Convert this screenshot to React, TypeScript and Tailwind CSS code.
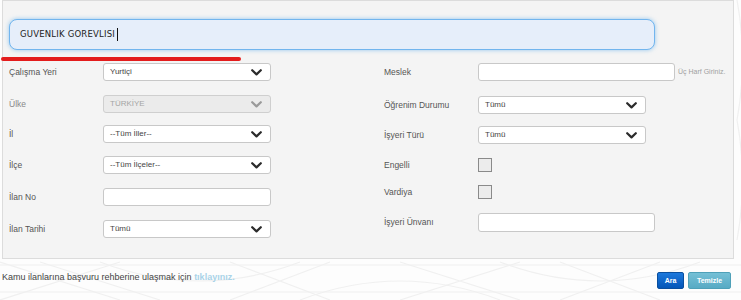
import React from 'react';

const Chevron: React.FC<{ muted?: boolean }> = ({ muted }) => (
  <svg width="11" height="7" viewBox="0 0 11 7" className="shrink-0">
    <path
      d="M1.2 1.2 L5.5 5.4 L9.8 1.2"
      fill="none"
      stroke={muted ? '#9a9a9a' : '#2b2b2b'}
      strokeWidth="2.2"
      strokeLinecap="round"
      strokeLinejoin="round"
    />
  </svg>
);

const Select: React.FC<{ value: string; disabled?: boolean }> = ({ value, disabled }) => (
  <div
    className={`w-[168px] h-[18px] rounded-[3px] border flex items-center justify-between pl-[6px] pr-[8px] text-[8px] ${
      disabled ? 'bg-[#ebebeb] border-[#cfcfcf] text-[#a5a5a5]' : 'bg-white border-[#c8c8c8] text-[#444]'
    }`}
  >
    <span>{value}</span>
    <Chevron muted={disabled} />
  </div>
);

const TextBox: React.FC<{ width: string; height?: string }> = ({ width, height = 'h-[18px]' }) => (
  <div className={`${width} ${height} rounded-[3px] border border-[#c8c8c8] bg-white`} />
);

const Check = () => <div className="w-[14px] h-[14px] border border-[#8a8a8a] bg-[#ececec]" />;

const Label: React.FC<{ children: React.ReactNode }> = ({ children }) => (
  <span className="w-[94px] shrink-0 text-[8.5px] text-[#555]">{children}</span>
);

export default function App() {
  return (
    <div className="relative w-[741px] h-[300px] overflow-hidden bg-[#fdfdfd] font-['Liberation_Sans',Arial,sans-serif]">
      {/* faint geometric background */}
      <svg className="absolute inset-0" width="741" height="300" viewBox="0 0 741 300">
        <g fill="none" stroke="#f0f0f0" strokeWidth="1.2">
          <path d="M0 262 L120 300 M40 262 L160 300 M120 262 L0 300 M230 262 L330 300 M330 262 L230 300" />
          <path d="M400 262 L520 300 M520 262 L400 300 M560 262 L660 300 M660 262 L560 300" />
          <path d="M100 262 Q200 300 300 262 M300 300 Q400 262 500 300 M500 262 Q600 300 700 262" />
          <path d="M737 0 Q748 60 737 120 M737 120 Q748 180 737 240" />
          <line x1="0" y1="265" x2="741" y2="265" />
          <line x1="0" y1="292" x2="741" y2="292" />
        </g>
      </svg>

      <div className="relative flex flex-col">
        <div className="ml-[2px] w-[732px] h-[259px] border border-[#dcdcdc] bg-[#f4f4f4] pt-[18px] px-[6px]">
          <div className="w-[646px] h-[31px] rounded-[8px] border border-[#72b5ee] bg-[#e6eefa] shadow-[0_0_4px_rgba(82,168,236,0.6)] flex items-center pl-[10px]">
            <span className="text-[8.5px] tracking-[0.2px] text-[#222] font-['DejaVu_Sans',sans-serif]">GUVENLIK GOREVLISI</span>
            <span className="ml-[2px] w-px h-[13px] bg-[#111]" />
          </div>

          <div className="flex mt-[13px]">
            <div className="w-[375px] flex flex-col">
              <div className="flex items-center h-[18px]">
                <Label>Çalışma Yeri</Label>
                <Select value="Yurtiçi" />
              </div>
              <div className="flex items-center h-[18px] mt-[14px]">
                <Label><span className="text-[#888]">Ülke</span></Label>
                <Select value="TÜRKİYE" disabled />
              </div>
              <div className="flex items-center h-[18px] mt-[12px]">
                <Label>İl</Label>
                <Select value="--Tüm İller--" />
              </div>
              <div className="flex items-center h-[18px] mt-[13px]">
                <Label>İlçe</Label>
                <Select value="--Tüm İlçeler--" />
              </div>
              <div className="flex items-center h-[18px] mt-[14px]">
                <Label>İlan No</Label>
                <TextBox width="w-[168px]" />
              </div>
              <div className="flex items-center h-[18px] mt-[14px]">
                <Label>İlan Tarihi</Label>
                <Select value="Tümü" />
              </div>
            </div>

            <div className="flex flex-col">
              <div className="flex items-center h-[18px]">
                <Label>Meslek</Label>
                <TextBox width="w-[197px]" />
                <span className="ml-[3px] text-[7px] text-[#a0a0a0]">Üç Harf Giriniz.</span>
              </div>
              <div className="flex items-center h-[18px] mt-[15px]">
                <Label>Öğrenim Durumu</Label>
                <Select value="Tümü" />
              </div>
              <div className="flex items-center h-[18px] mt-[12px]">
                <Label>İşyeri Türü</Label>
                <Select value="Tümü" />
              </div>
              <div className="flex items-center h-[14px] mt-[14px]">
                <Label>Engelli</Label>
                <Check />
              </div>
              <div className="flex items-center h-[14px] mt-[13px]">
                <Label>Vardiya</Label>
                <Check />
              </div>
              <div className="flex items-center h-[19px] mt-[14px]">
                <Label>İşyeri Ünvanı</Label>
                <TextBox width="w-[177px]" height="h-[19px]" />
              </div>
            </div>
          </div>
        </div>

        <div className="flex items-center justify-between mt-[12px] pl-[2px] pr-[10px]">
          <p className="pb-[6px] text-[9px] text-[#444]">
            Kamu ilanlarına başvuru rehberine ulaşmak için{' '}
            <span className="font-bold text-[#a9d3e8]">tıklayınız.</span>
          </p>
          <div className="flex gap-[4px]">
            <button className="w-[27px] h-[17px] rounded-[2px] border border-[#0a4f9e] bg-gradient-to-b from-[#1c78dc] to-[#0456b8] text-[7px] font-bold text-white">
              Ara
            </button>
            <button className="w-[43px] h-[17px] rounded-[2px] border border-[#4ea0b8] bg-gradient-to-b from-[#74c0d6] to-[#58aac4] text-[7px] font-bold text-white">
              Temizle
            </button>
          </div>
        </div>
      </div>

      {/* red annotation underline */}
      <div className="absolute left-[1px] top-[57px] w-[240px] h-[4px] rounded-full bg-[#e31c1c]" />
    </div>
  );
}
